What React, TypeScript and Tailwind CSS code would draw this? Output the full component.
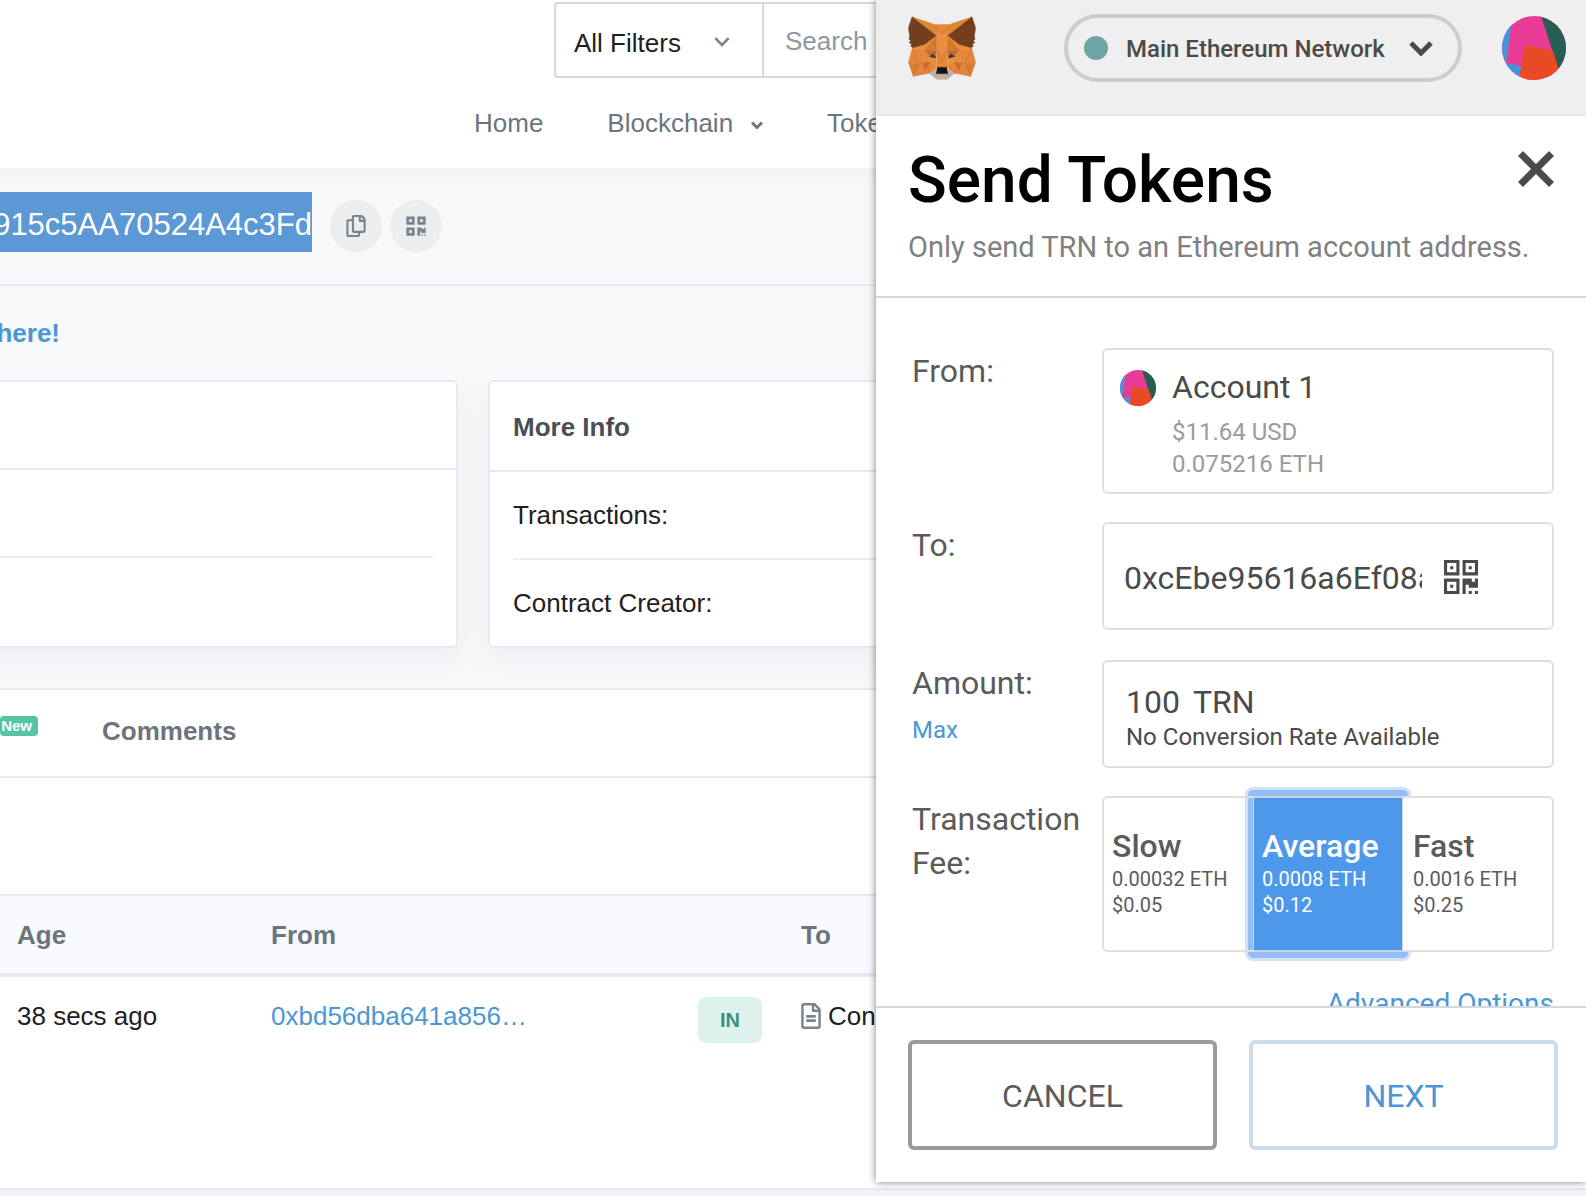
import type { ReactNode } from "react";
import { FaQrcode, FaRegCopy, FaRegFileAlt } from "react-icons/fa";

const foxLeft = [
  { points: "65,35 134,58 148,58 138,91", fill: "#e08532" },
  { points: "138,91 148,58 155.5,58 155.5,91", fill: "#e8893a" },
  { points: "66,128 138,91 103,135", fill: "#e98c3c" },
  { points: "103,135 138,91 140,137", fill: "#d67a30" },
  { points: "138,91 155.5,91 155.5,150 140,137", fill: "#ec8f3d" },
  { points: "66,128 103,135 98,173 54,172", fill: "#e6863a" },
  { points: "54,172 98,173 69,215", fill: "#db7c33" },
  { points: "98,173 118,205 69,215", fill: "#e2833a" },
  { points: "103,135 140,137 137,160 118,155", fill: "#c5672c" },
  { points: "103,135 118,155 98,173", fill: "#e98a38" },
  { points: "98,173 118,155 137,160 138,187", fill: "#ea8c3a" },
  { points: "96,173 121,173 106,199", fill: "#cd6b2e" },
  { points: "121,173 138,187 135,193 118,205 106,199", fill: "#e58539" },
  { points: "140,137 155.5,150 155.5,187 138,187", fill: "#e68738" },
  { points: "118,206 136,192 140,207 155.5,207 155.5,224 140,224", fill: "#c2afa4" },
  { points: "116,155 129,147 138,160", fill: "#2d3c41" },
  { points: "141,187 155.5,187 155.5,207 138,207", fill: "#141414" },
  {
    points: "65,35 138,91 104,118 68,128 60,123 64,118 56,113 61,108 55,101 58,96 54,68",
    fill: "#733e1c",
  },
];

const foxLines =
  "M65 35 105 70M88 55 98 106M54 68 138 91M61 108 138 91M66 128 98 106M138 91V137M66 128 84 173 69 215M103 135 118 205M120 100 155 150M140 137 155.5 172M134 58 155.5 91";

function FoxLogo() {
  const half = (
    <>
      {foxLeft.map((p) => (
        <polygon key={p.points} points={p.points} fill={p.fill} stroke={p.fill} strokeWidth="0.8" />
      ))}
      <path d={foxLines} stroke="#7a4a22" strokeOpacity="0.4" strokeWidth="1.4" fill="none" />
    </>
  );
  return (
    <svg viewBox="53 33 205 192" className="h-16 w-[68px]" role="img" aria-label="MetaMask">
      <g>{half}</g>
      <g transform="translate(311 0) scale(-1 1)">{half}</g>
    </svg>
  );
}

function Identicon({ className }: { className: string }) {
  return (
    <svg viewBox="0 0 64 64" className={`overflow-hidden rounded-full ${className}`} aria-hidden="true">
      <rect width="64" height="64" fill="#e93b96" />
      <polygon points="0,0 10,0 9,12 4,47 19,50 17,64 0,64" fill="#4595dd" />
      <polygon points="39,0 64,0 64,64 60,64" fill="#275d54" />
      <polygon points="23,29 51,35 60,64 17,64" fill="#e84a23" />
    </svg>
  );
}

function ScanIcon() {
  return (
    <svg viewBox="0 0 11 11" className="size-[34px]" fill="#4a4a4a" fillRule="evenodd" aria-hidden="true">
      <path d="M0 0h5v5H0zM1 1v3h3V1zM2 2h1v1H2zM6 0h5v5H6zM7 1v3h3V1zM8 2h1v1H8zM0 6h5v5H0zM1 7v3h3V7zM2 8h1v1H2z" />
      <path d="M11 6v3H8V8H7v3H6V6h3v1h1V6zM8 10h1v1H8zM10 10h1v1h-1z" />
    </svg>
  );
}

function Chevron({ className, width }: { className: string; width: number }) {
  return (
    <svg viewBox="0 0 24 16" className={className} fill="none" stroke="currentColor" strokeWidth={width} aria-hidden="true">
      <path d="M2 3l10 10L22 3" />
    </svg>
  );
}

function InfoCard({ title, rows, className }: { title?: string; rows: string[]; className: string }) {
  return (
    <section className={`rounded-md border-2 border-[#e7eaf3] bg-white shadow-[0_12px_30px_rgba(140,152,164,0.1)] ${className}`}>
      <h2 className={`flex items-center border-b-2 border-[#e7eaf3] px-[23px] pt-0.5 font-bold text-[#4a4f55] ${title ? "h-[90px]" : "h-[88px]"}`}>
        {title}
      </h2>
      <dl className="px-[23px]">
        {rows.map((row, i) => (
          <div key={i} className="flex h-[88px] items-center border-b-2 border-[#eaeef6] last:h-[86px] last:border-b-0">
            <dt>{row}</dt>
          </div>
        ))}
      </dl>
    </section>
  );
}

function Explorer() {
  return (
    <div className="flex min-h-screen flex-col whitespace-nowrap bg-[#f8f9fb] font-['Liberation_Sans',Arial,sans-serif] text-[26px] leading-[30px] text-[#1e2022]">
      <header className="h-[168px] bg-white pt-0.5">
        <form className="ml-[554px] flex h-[76px] rounded-l border-2 border-[#d5dae2]">
          <div className="relative w-[208px] border-r-2 border-[#d5dae2]">
            <select aria-label="Filter" className="size-full appearance-none bg-transparent pt-1.5 pl-[18px] outline-none">
              <option>All Filters</option>
            </select>
            <Chevron width={4} className="pointer-events-none absolute top-8 right-8 h-[11px] w-4 text-[#77838f]" />
          </div>
          <input
            aria-label="Search"
            placeholder="Search by Address / Txn Hash"
            className="min-w-0 flex-1 px-[21px] pt-0.5 placeholder:text-[#8c98a4]"
          />
        </form>
        <nav className="ml-[474px] flex pt-[30px] text-[#6c757e]">
          <a href="#home" className="mr-16">Home</a>
          <button type="button" className="mr-16 flex items-center gap-[18px]">
            Blockchain
            <Chevron width={6} className="mt-1 h-2 w-3" />
          </button>
          <a href="#tokens">Tokens</a>
        </nav>
      </header>

      <div className="flex h-[118px] items-start border-b-2 border-[#e7eaf3] bg-linear-to-b from-[#f2f3f5] to-[#f8f9fb] to-15% pt-6">
        <h1 className="flex h-15 w-[312px] items-center justify-end overflow-hidden bg-[#5b98d5] pt-1.5 text-[31px] text-white">
          915c5AA70524A4c3Fd
        </h1>
        <button type="button" aria-label="Copy address" className="mt-2 ml-[18px] grid size-[52px] place-items-center rounded-full bg-[#ecedef] text-[#77838f]">
          <FaRegCopy className="size-[22px]" />
        </button>
        <button type="button" aria-label="Show QR code" className="mt-2 ml-2 grid size-[52px] place-items-center rounded-full bg-[#ecedef] text-[#77838f]">
          <FaQrcode className="size-[22px]" />
        </button>
      </div>

      <div className="flex h-[94px] w-15 items-center justify-end overflow-hidden">
        <a href="#here" className="font-bold text-[#4b97d6]">here!</a>
      </div>

      <div className="flex gap-[30px]">
        <InfoCard className="-ml-[30px] w-[488px]" rows={["", ""]} />
        <InfoCard className="flex-1" title="More Info" rows={["Transactions:", "Contract Creator:"]} />
      </div>

      <section className="mt-10 flex-1 border-y-2 border-[#e7eaf3] bg-white">
        <div className="flex h-[88px] items-center border-b-2 border-[#e7eaf3] pb-1 font-bold">
          <span className="mr-16 -mt-2.5 flex h-5 w-[38px] items-center justify-end rounded bg-[#57c3a5] pr-1.5 text-[15px] text-white">
            New
          </span>
          <a href="#comments" className="text-[#6c757e]">Comments</a>
        </div>
        <table className="mt-[116px] w-full table-fixed border-collapse text-left">
          <colgroup>
            <col className="w-[271px]" />
            <col className="w-[427px]" />
            <col className="w-[103px]" />
            <col />
          </colgroup>
          <thead className="border-t-2 border-b-4 border-[#e7eaf3] bg-[#f8fafd] text-[#6c757e]">
            <tr className="h-20">
              <th className="pl-[17px]">Age</th>
              <th>From</th>
              <th aria-label="Direction" />
              <th>To</th>
            </tr>
          </thead>
          <tbody>
            <tr className="align-top">
              <td className="pt-6 pl-[17px]">38 secs ago</td>
              <td className="pt-6"><a href="#from" className="text-[#4b97d6]">0xbd56dba641a856…</a></td>
              <td className="pt-5">
                <span className="flex h-[46px] w-16 items-center justify-center rounded-lg bg-[#ddf2ec] text-[20px] font-bold text-[#3f8f7e]">IN</span>
              </td>
              <td className="pt-6">
                <span className="flex items-center gap-[7px]">
                  <FaRegFileAlt className="h-[26px] w-5 text-[#77838f]" />
                  Contract
                </span>
              </td>
            </tr>
          </tbody>
        </table>
      </section>
      <footer className="h-1.5 bg-[#f1f2f5]" />
    </div>
  );
}

function Row({ label, htmlFor, extra, children }: { label: string; htmlFor?: string; extra?: ReactNode; children: ReactNode }) {
  return (
    <div className="flex">
      <div className="w-[190px] shrink-0 pt-px pr-4 text-[32px] leading-11 text-[#5b5b5b]">
        <label htmlFor={htmlFor}>{label}</label>
        {extra}
      </div>
      <div className="min-w-0 flex-1">{children}</div>
    </div>
  );
}

const box = "rounded-md border-2 border-[#dedede] bg-white";

const fees = [
  {
    name: "Slow",
    eth: "0.00032 ETH",
    usd: "$0.05",
    style: "rounded-l-md border-y-2 border-l-2 border-[#dedede] pl-2 text-[#5b5b5b]",
  },
  {
    name: "Average",
    eth: "0.0008 ETH",
    usd: "$0.12",
    style:
      "relative border-x border-y-2 border-[#cbd5e1] bg-[#4d98ea] pl-2 text-white outline-none before:absolute before:-inset-x-[9px] before:-inset-y-[11px] before:-z-10 before:rounded-lg before:border-3 before:border-[#cfe1fb] before:bg-[#94bdf8]",
  },
  {
    name: "Fast",
    eth: "0.0016 ETH",
    usd: "$0.25",
    style: "relative rounded-r-md border-y-2 border-r-2 border-[#dedede] bg-white pl-2.5 text-[#5b5b5b]",
  },
];

function FeePicker() {
  return (
    <div role="group" aria-label="Transaction fee" className="isolate grid h-39 grid-cols-[151px_150px_1fr]">
      {fees.map((fee) => (
        <button key={fee.name} type="button" aria-pressed={fee.name === "Average"} className={`text-left ${fee.style}`}>
          <span className="-mt-0.5 block text-[32px] leading-9 font-medium">{fee.name}</span>
          <span className="block pt-0.5 text-[20px] leading-[26px]">{fee.eth}</span>
          <span className="block text-[20px] leading-[26px]">{fee.usd}</span>
        </button>
      ))}
    </div>
  );
}

function Wallet() {
  return (
    <aside className="absolute top-0 right-0 flex h-[calc(100vh-14px)] w-[710px] flex-col bg-white font-[Roboto,sans-serif] shadow-[0_0_8px_rgba(0,0,0,0.5)]">
      <header className="flex h-[116px] shrink-0 items-start border-b-2 border-[#e9e9e9] bg-[#efefef] pt-3.5 pr-5 pl-8">
        <div className="pt-0.5"><FoxLogo /></div>
        <button
          type="button"
          className="mr-auto ml-[88px] flex h-17 w-[398px] items-center rounded-full border-4 border-[#cdcdcd] pl-4 text-[24px] font-medium text-[#4a4a4a]"
        >
          <span className="mr-[18px] size-6 rounded-full bg-[#70a5a8]" />
          <span className="pt-0.5">Main Ethereum Network</span>
          <Chevron width={5} className="ml-6 h-4 w-6" />
        </button>
        <div className="pt-0.5"><Identicon className="size-16" /></div>
      </header>

      <div className="relative h-[182px] shrink-0 border-b-2 border-[#d2d8dd] pt-6 pl-8">
        <h2 className="pt-px text-[64px] leading-[80px] font-medium text-black">Send Tokens</h2>
        <p className="mt-1.5 text-[29px] leading-10 text-[#808080]">Only send TRN to an Ethereum account address.</p>
        <button type="button" aria-label="Close" className="absolute top-[35px] right-8">
          <svg viewBox="0 0 36 36" className="size-9" stroke="#4a4a4a" strokeWidth="7">
            <path d="M2.5 2.5l31 31M33.5 2.5l-31 31" />
          </svg>
        </button>
      </div>

      <div className="flex min-h-0 flex-1 flex-col gap-7 overflow-hidden pt-[50px] pr-8 pl-9">
        <Row label="From:">
          <div className={`flex h-[146px] pt-5 pl-4 ${box}`}>
            <Identicon className="size-9 shrink-0" />
            <div className="pl-4 text-[24px] leading-8 text-[#9b9b9b]">
              <div className="-mt-px mb-[11px] text-[32px] leading-9 text-[#4a4a4a]">Account 1</div>
              <div>$11.64 USD</div>
              <div>0.075216 ETH</div>
            </div>
          </div>
        </Row>
        <Row label="To:" htmlFor="to">
          <div className={`mb-0.5 flex h-27 items-center pl-5 ${box}`}>
            <input id="to" defaultValue="0xcEbe95616a6Ef08a" className="mr-[22px] w-[298px] pt-1 text-[32px] text-[#4a4a4a] outline-none" />
            <button type="button" aria-label="Scan QR code" className="pt-0.5"><ScanIcon /></button>
          </div>
        </Row>
        <Row
          label="Amount:"
          htmlFor="amount"
          extra={<button type="button" className="block text-[24px] leading-[50px] text-[#4b97d6]">Max</button>}
        >
          <div className={`h-27 pt-[22px] pl-[22px] text-[#4a4a4a] ${box}`}>
            <div className="flex text-[32px] leading-9">
              <input id="amount" defaultValue="100" className="w-[67px] outline-none" />
              TRN
            </div>
            <div className="pt-px text-[24px] leading-8">No Conversion Rate Available</div>
          </div>
        </Row>
        <Row label="Transaction Fee:"><FeePicker /></Row>
        <div className="-mt-1 text-right text-[28px] leading-[56px]">
          <a href="#advanced" className="text-[#4b97d6]">Advanced Options</a>
        </div>
      </div>

      <footer className="grid shrink-0 grid-cols-2 gap-8 border-t-2 border-[#d2d8dd] pt-8 pr-7 pb-8 pl-8 text-[32px]">
        <button type="button" className="h-[110px] rounded-md border-4 border-[#9b9b9b] pt-0.5 text-[#5b5b5b]">CANCEL</button>
        <button type="button" className="h-[110px] rounded-md border-4 border-[#ccdeed] pt-0.5 text-[#4b97d6]">NEXT</button>
      </footer>
    </aside>
  );
}

export default function App() {
  return (
    <div className="relative overflow-hidden">
      <Explorer />
      <Wallet />
    </div>
  );
}
